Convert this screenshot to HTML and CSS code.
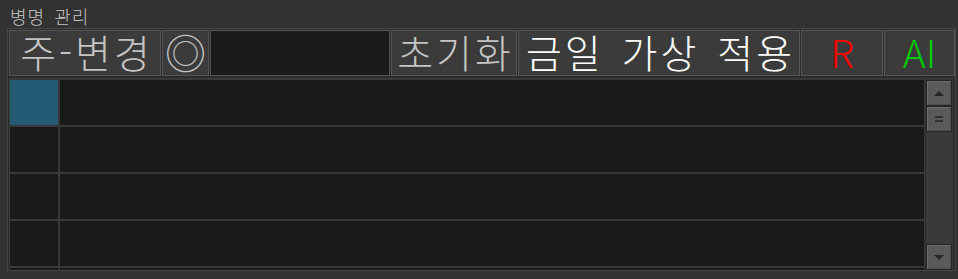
FILE: index.html
```html
<!DOCTYPE html>
<html lang="ko">
<head>
    <meta charset="UTF-8">
    <title>병명 관리</title>
    <link rel="stylesheet" href="styles.css">
</head>
<body>
    <div class="title">병명 관리</div>

    <section class="panel">
        <!-- 상단 버튼 -->
        <div class="toolbar">
            <button class="btn btn-main">주-변경</button>
            <button class="btn btn-circle">◎</button>
            <div class="field"></div>
            <button class="btn btn-reset">초기화</button>
            <button class="btn btn-apply">금일 가상 적용</button>
            <button class="btn btn-r">R</button>
            <button class="btn btn-ai">AI</button>
        </div>

        <!-- 목록 -->
        <div class="list">
            <div class="grid">
                <div class="row">
                    <div class="cell cell-head selected"></div>
                    <div class="cell"></div>
                </div>
                <div class="row">
                    <div class="cell cell-head"></div>
                    <div class="cell"></div>
                </div>
                <div class="row">
                    <div class="cell cell-head"></div>
                    <div class="cell"></div>
                </div>
                <div class="row">
                    <div class="cell cell-head"></div>
                    <div class="cell"></div>
                </div>
                <div class="row">
                    <div class="cell cell-head"></div>
                    <div class="cell"></div>
                </div>
            </div>
            <div class="scrollbar">
                <div class="sb-btn"><span class="arrow-up"></span></div>
                <div class="sb-btn sb-thumb"><span class="grip"></span></div>
                <div class="sb-btn sb-down"><span class="arrow-down"></span></div>
            </div>
        </div>
    </section>
</body>
</html>
```

FILE: styles.css
```css
/* General */
body {
    margin: 0;
    padding: 0;
    width: 958px;
    height: 279px;
    overflow: hidden;
    background: #323232;
    font-family: "Noto Sans CJK KR", "Noto Sans", sans-serif;
    font-weight: 300;
}

.title {
    height: 28px;
    box-sizing: border-box;
    padding: 9px 0 0 10px;
    font-size: 18px;
    line-height: 14px;
    color: #c4c4c4;
    letter-spacing: 1px;
    word-spacing: 3px;
}

/* Panel */
.panel {
    margin-left: 7px;
    width: 949px;
    height: 243px;
    box-sizing: border-box;
    border: 1px solid #474747;
    background: #2c2c2c;
    display: flex;
    flex-direction: column;
}

/* Toolbar */
.toolbar {
    display: flex;
    gap: 1px;
    padding: 1px 0 1px 1px;
    height: 48px;
    box-sizing: border-box;
}

.btn {
    height: 46px;
    box-sizing: border-box;
    border: 1px solid #555;
    background: #3b3b3b;
    color: #c4c4c4;
    font-family: inherit;
    font-weight: 300;
    font-size: 39px;
    line-height: 1;
    letter-spacing: 3px;
    padding: 0 0 4px 3px;
    margin: 0;
    display: flex;
    align-items: center;
    justify-content: center;
    white-space: nowrap;
    cursor: pointer;
}

.btn-main { width: 152px; }
.btn-circle { width: 47px; font-size: 41px; letter-spacing: 0; padding-left: 0; }
.btn-reset { width: 126px; }
.btn-apply { width: 282px; color: #fff; word-spacing: 4px; }
.btn-r { width: 82px; color: #ff0000; letter-spacing: 0; padding-left: 0; }
.btn-ai { width: 71px; color: #00c800; letter-spacing: 0; padding-left: 0; }

.field {
    width: 180px;
    height: 46px;
    box-sizing: border-box;
    border: 1px solid #555;
    background: #1b1b1b;
}

/* Grid */
.list {
    flex: 1;
    display: flex;
    padding: 1px 2px 0 1px;
    overflow: hidden;
}

.grid {
    flex: 1;
    border-top: 2px solid #3a3a3a;
    border-left: 1px solid #3a3a3a;
    border-right: 1px solid #3a3a3a;
    overflow: hidden;
    background: #3a3a3a;
}

.row {
    display: flex;
    height: 47px;
    box-sizing: border-box;
    border-bottom: 2px solid #383838;
}

.cell {
    flex: 1;
    background: #1a1a1a;
}

.cell-head {
    flex: 0 0 48px;
    border-right: 2px solid #383838;
}

.selected {
    background: #255a74;
}

/* Scrollbar */
.scrollbar {
    width: 27px;
    margin-left: 1px;
    background: #3a3a3a;
    display: flex;
    flex-direction: column;
    padding-top: 2px;
    box-sizing: border-box;
}

.sb-btn {
    width: 26px;
    height: 26px;
    box-sizing: border-box;
    border: 1px solid #262626;
    background: #5a5a5a;
    box-shadow: inset 1px 1px 0 #6c6c6c, inset -1px -1px 0 #4c4c4c;
    display: flex;
    align-items: center;
    justify-content: center;
}

.sb-down {
    margin-top: auto;
}

.arrow-up {
    width: 0;
    height: 0;
    border-left: 5px solid transparent;
    border-right: 5px solid transparent;
    border-bottom: 5px solid #262626;
}

.arrow-down {
    width: 0;
    height: 0;
    border-left: 5px solid transparent;
    border-right: 5px solid transparent;
    border-top: 5px solid #262626;
}

.grip {
    width: 8px;
    height: 2px;
    border-top: 2px solid #333;
    border-bottom: 2px solid #333;
}
```
